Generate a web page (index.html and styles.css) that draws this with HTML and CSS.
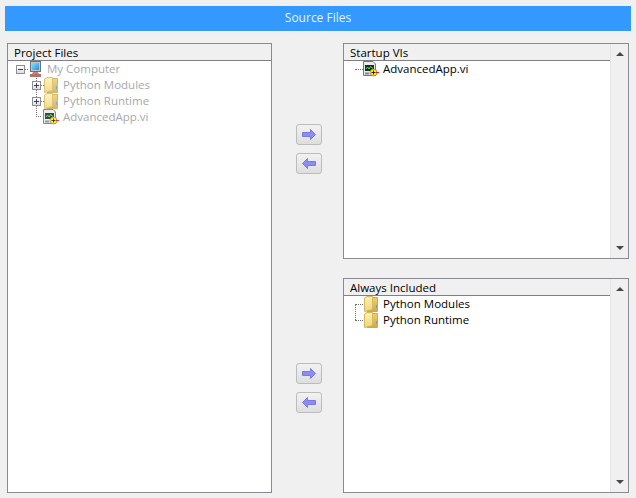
FILE: index.html
```html
<!DOCTYPE html>
<html lang="en">
<head>
  <meta charset="UTF-8" />
  <title>Source Files</title>
  <link rel="stylesheet" href="styles.css">
</head>
<body>

  <svg class="defs" width="0" height="0">
    <defs>
      <linearGradient id="folha-clara" x1="0" y1="0" x2="0" y2="1">
        <stop offset="0" stop-color="#fff2b4"/>
        <stop offset="1" stop-color="#f0d474"/>
      </linearGradient>
      <linearGradient id="folha-escura" x1="0" y1="0" x2="0" y2="1">
        <stop offset="0" stop-color="#f0d068"/>
        <stop offset="1" stop-color="#d4a848"/>
      </linearGradient>
      <linearGradient id="tela" x1="0" y1="0" x2="1" y2="1">
        <stop offset="0" stop-color="#60e0ff"/>
        <stop offset="1" stop-color="#1078d8"/>
      </linearGradient>
    </defs>
    <symbol id="folder" viewBox="0 0 15 16">
      <path d="M7 1.5 H13.5 V15.5 H3 Z" fill="url(#folha-escura)" stroke="#c8a850"/>
      <path d="M.5 2 L3 .5 H8.5 V13.5 L.5 15.5 Z" fill="url(#folha-clara)" stroke="#d4b860"/>
      <rect x="12" y="9" width="1" height="3" fill="#6aa0c8"/>
    </symbol>
    <symbol id="vi" viewBox="0 0 16 16">
      <path d="M.5 .5 H10 L12.5 3 V14.5 H.5 Z" fill="#e8eaf4" stroke="#6670b0"/>
      <rect x="2" y="4" width="9" height="6" fill="#1c2a1c"/>
      <path d="M3 8 L4.5 6 L6 8 L7.5 5.5 L10 7.5" fill="none" stroke="#5ce05c"/>
      <rect x="2" y="11.5" width="4" height="2" fill="#7080c8"/>
      <circle cx="10.5" cy="11.5" r="3.5" fill="#ffee20" stroke="#807010" stroke-width=".7"/>
      <path d="M8.5 11.5 H12.5 M10.5 9.5 V13.5" stroke="#301808"/>
      <path d="M13 11.5 H16" stroke="#e01818"/>
    </symbol>
    <symbol id="computer" viewBox="0 0 14 17">
      <rect x="2.5" y=".5" width="10" height="10" fill="#b8bcc8" stroke="#505868"/>
      <rect x="4" y="2" width="7" height="7" fill="url(#tela)"/>
      <path d="M5 11 H10 L11 13 H4 Z" fill="#b87068"/>
      <rect x="2" y="13" width="11" height="3" fill="#a85850"/>
    </symbol>
    <symbol id="arrow-right" viewBox="0 0 14 11">
      <path d="M.5 3.5 H8.5 V.5 L13.5 5.5 L8.5 10.5 V7.5 H.5 Z" fill="#8c8cf8" stroke="#7a7ad8"/>
    </symbol>
    <symbol id="arrow-left" viewBox="0 0 14 11">
      <path d="M13.5 3.5 H5.5 V.5 L.5 5.5 L5.5 10.5 V7.5 H13.5 Z" fill="#8c8cf8" stroke="#7a7ad8"/>
    </symbol>
  </svg>

  <div class="titulo">Source Files</div>

  <div class="conteudo">
    <div class="painel painel-projeto">
      <div class="cabecalho">Project Files</div>
      <ul class="arvore desativada">
        <li class="linha nivel-0">
          <span class="expansor menos"></span>
          <span class="ponto"></span>
          <svg class="icone-pc"><use href="#computer"/></svg>
          <span class="rotulo">My Computer</span>
        </li>
        <li class="linha nivel-1">
          <span class="expansor mais"></span>
          <span class="ponto"></span>
          <svg class="icone-pasta"><use href="#folder"/></svg>
          <span class="rotulo">Python Modules</span>
        </li>
        <li class="linha nivel-1">
          <span class="expansor mais"></span>
          <span class="ponto"></span>
          <svg class="icone-pasta"><use href="#folder"/></svg>
          <span class="rotulo">Python Runtime</span>
        </li>
        <li class="linha nivel-1 com-canto">
          <span class="canto"></span>
          <svg class="icone-vi"><use href="#vi"/></svg>
          <span class="rotulo">AdvancedApp.vi</span>
        </li>
      </ul>
    </div>

    <div class="meio">
      <div class="botoes botoes-cima">
        <button class="seta"><svg><use href="#arrow-right"/></svg></button>
        <button class="seta"><svg><use href="#arrow-left"/></svg></button>
      </div>
      <div class="botoes botoes-baixo">
        <button class="seta"><svg><use href="#arrow-right"/></svg></button>
        <button class="seta"><svg><use href="#arrow-left"/></svg></button>
      </div>
    </div>

    <div class="direita">
      <div class="painel painel-startup">
        <div class="area">
          <div class="cabecalho">Startup VIs</div>
          <ul class="arvore">
            <li class="linha raiz">
              <span class="traco"></span>
              <svg class="icone-vi"><use href="#vi"/></svg>
              <span class="rotulo">AdvancedApp.vi</span>
            </li>
          </ul>
        </div>
        <div class="rolagem"><span class="sobe"></span><span class="desce"></span></div>
      </div>

      <div class="painel painel-sempre">
        <div class="area">
          <div class="cabecalho">Always Included</div>
          <ul class="arvore com-colchete">
            <li class="linha raiz">
              <span class="traco"></span>
              <svg class="icone-pasta"><use href="#folder"/></svg>
              <span class="rotulo">Python Modules</span>
            </li>
            <li class="linha raiz">
              <span class="traco"></span>
              <svg class="icone-pasta"><use href="#folder"/></svg>
              <span class="rotulo">Python Runtime</span>
            </li>
          </ul>
        </div>
        <div class="rolagem"><span class="sobe"></span><span class="desce"></span></div>
      </div>
    </div>
  </div>

</body>
</html>
```

FILE: styles.css
```css
html, body {
  margin: 0;
  height: 100%;
}

body {
  background-color: #f0f0f0;
  font-family: "Open Sans", "Noto Sans", Arial, sans-serif;
  font-size: 11.5px;
  color: #000;
  padding: 6px 5px 0;
  box-sizing: border-box;
  overflow: hidden;
}

.defs {
  position: absolute;
}

.titulo {
  height: 25px;
  line-height: 24px;
  background-color: #3399ff;
  color: #e8f2ff;
  font-size: 12px;
  text-align: center;
  width: 626px;
}

.conteudo {
  display: flex;
  margin: 12px 0 0 2px;
  height: 450px;
}

.painel {
  border: 1px solid #8a8a94;
  background-color: #fff;
  box-sizing: border-box;
}

.painel-projeto {
  width: 265px;
}

.cabecalho {
  height: 16px;
  line-height: 18px;
  padding-left: 6px;
  background-color: #f0f0f0;
  border-bottom: 1px solid #808080;
}

.arvore {
  list-style: none;
  margin: 0;
  padding: 0;
  position: relative;
}

.linha {
  display: flex;
  align-items: center;
  height: 16px;
  position: relative;
  white-space: nowrap;
}

.rotulo {
  margin-top: -2px;
}

.desativada {
  color: #a8a8a8;
}

.desativada svg {
  opacity: .85;
}

.expansor {
  width: 9px;
  height: 9px;
  border: 1px solid #8c8c98;
  box-sizing: border-box;
  background: linear-gradient(#fff, #dcdce4);
  position: relative;
  flex: none;
}

.expansor::before {
  content: "";
  position: absolute;
  left: 1px;
  top: 3px;
  width: 5px;
  height: 1px;
  background-color: #404050;
}

.mais::after {
  content: "";
  position: absolute;
  left: 3px;
  top: 1px;
  width: 1px;
  height: 5px;
  background-color: #404050;
}

.ponto {
  width: 3px;
  border-top: 1px dotted #707070;
  flex: none;
}

.nivel-0 {
  padding-left: 8px;
}

.nivel-0 .icone-pc {
  width: 14px;
  height: 17px;
  margin-right: 5px;
  flex: none;
}

.nivel-1 {
  padding-left: 24px;
}

.nivel-1 .icone-pasta {
  width: 15px;
  height: 16px;
  margin-right: 4px;
  flex: none;
}

.nivel-1 .icone-vi {
  width: 16px;
  height: 16px;
  margin: 0 4px 0 2px;
  flex: none;
}

/* linha vertical pontilhada da arvore do projeto */
.desativada::before {
  content: "";
  position: absolute;
  left: 28px;
  top: 13px;
  height: 43px;
  border-left: 1px dotted #707070;
}

.com-canto {
  padding-left: 28px;
}

.com-canto .canto {
  width: 5px;
}

.canto {
  height: 1px;
  border-top: 1px dotted #707070;
  flex: none;
}

.meio {
  width: 71px;
  flex: none;
  display: flex;
  flex-direction: column;
  padding-left: 24px;
  box-sizing: border-box;
}

.botoes {
  display: flex;
  flex-direction: column;
  gap: 8px;
}

.botoes-cima {
  margin-top: 81px;
}

.botoes-baixo {
  margin-top: 189px;
}

.seta {
  width: 26px;
  height: 21px;
  padding: 0;
  border: 1px solid #bcbcbc;
  border-radius: 3px;
  background: linear-gradient(#f2f2f2, #dedede);
  display: flex;
  align-items: center;
  justify-content: center;
}

.seta svg {
  width: 14px;
  height: 11px;
}

.direita {
  width: 286px;
  flex: none;
  display: flex;
  flex-direction: column;
  gap: 19px;
}

.direita .painel {
  display: flex;
}

.painel-startup {
  height: 216px;
}

.painel-sempre {
  height: 215px;
}

.area {
  flex: 1;
}

.raiz {
  padding-left: 11px;
}

.traco {
  width: 8px;
  border-top: 1px dotted #707070;
  flex: none;
}

.raiz .icone-vi {
  width: 16px;
  height: 16px;
  margin-right: 4px;
  flex: none;
}

.raiz .icone-pasta {
  width: 15px;
  height: 16px;
  margin: 0 4px 0 1px;
  flex: none;
}

.com-colchete::before {
  content: "";
  position: absolute;
  left: 11px;
  top: 8px;
  height: 16px;
  border-left: 1px dotted #707070;
}

.rolagem {
  width: 18px;
  flex: none;
  background-color: #f0f0f0;
  border-left: 1px solid #e4e4e4;
  display: flex;
  flex-direction: column;
  justify-content: space-between;
  align-items: center;
  padding: 8px 0;
  box-sizing: border-box;
}

.sobe {
  width: 0;
  height: 0;
  border-left: 4px solid transparent;
  border-right: 4px solid transparent;
  border-bottom: 4px solid #484848;
}

.desce {
  width: 0;
  height: 0;
  border-left: 4px solid transparent;
  border-right: 4px solid transparent;
  border-top: 4px solid #484848;
}
```
